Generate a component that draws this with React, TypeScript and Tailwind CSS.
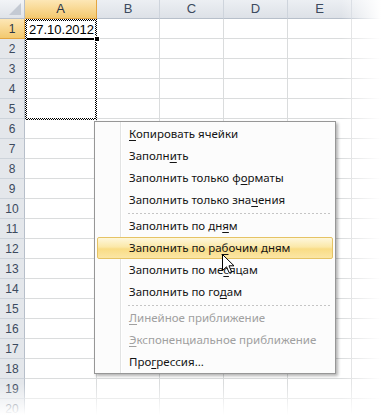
import React from "react"

const cols = [
  { name: "A", w: "w-[72px]" },
  { name: "B", w: "w-[63px]" },
  { name: "C", w: "w-[64px]" },
  { name: "D", w: "w-[64px]" },
  { name: "E", w: "w-[64px]" },
  { name: "", w: "w-[64px]" },
]

const rows = Array.from({ length: 20 }, (_, i) => i + 1)

type Item =
  | { sep: true }
  | { sep?: false; pre: string; key: string; post: string; active?: boolean; disabled?: boolean }

const items: Item[] = [
  { pre: "", key: "К", post: "опировать ячейки" },
  { pre: "Заполн", key: "и", post: "ть" },
  { pre: "Заполнить только ф", key: "о", post: "рматы" },
  { pre: "Заполнить только зна", key: "ч", post: "ения" },
  { sep: true },
  { pre: "Заполнить по дн", key: "я", post: "м" },
  { pre: "Заполнить по ра", key: "б", post: "очим дням", active: true },
  { pre: "Заполнить по ме", key: "с", post: "яцам" },
  { pre: "Заполнить по го", key: "д", post: "ам" },
  { sep: true },
  { pre: "", key: "Л", post: "инейное приближение", disabled: true },
  { pre: "", key: "Э", post: "кспоненциальное приближение", disabled: true },
  { pre: "Про", key: "г", post: "рессия..." },
]

const checker =
  "bg-[conic-gradient(#000_25%,#fff_0_50%,#000_0_75%,#fff_0)] bg-[length:2px_2px]"

function ContextMenu() {
  return (
    <div className="absolute left-[94px] top-[121px] w-[242px] border border-[#979797] bg-[#fcfcfc] pt-px shadow-[2px_2px_3px_rgba(0,0,0,0.3)] font-['Noto_Sans',sans-serif] text-[11.5px]">
      {/* icon gutter line */}
      <div className="absolute left-[25px] top-0 bottom-0 w-px bg-[#e2e3e3]" />
      <div className="absolute left-[26px] top-0 bottom-0 w-px bg-white" />
      {items.map((it, i) =>
        it.sep ? (
          <div key={i} className="h-[4px] flex items-center pl-[33px] pr-[3px]">
            <div className="h-px w-full bg-[repeating-linear-gradient(90deg,#c5c5c5_0_2px,transparent_2px_4px)]" />
          </div>
        ) : (
          <div
            key={i}
            className={
              "relative mx-[2px] h-[22px] flex items-center pl-[31px] rounded-[2px] border " +
              (it.active
                ? "border-[#e5c365] bg-[linear-gradient(#fef7dc,#fbe8a8_45%,#f9dc85_55%,#fbe6a5)]"
                : "border-transparent") +
              (it.disabled ? " text-[#a0a0a0]" : " text-[#141414]")
            }
          >
            <span className="whitespace-pre leading-none">
              {it.pre}
              <span className="underline underline-offset-[2px] decoration-1">{it.key}</span>
              {it.post}
            </span>
          </div>
        )
      )}
    </div>
  )
}

function Cursor() {
  return (
    <svg className="absolute left-[222px] top-[254px]" width="13" height="20" viewBox="0 0 13 20">
      <path
        d="M0.5 0.5 L0.5 16.5 L4.5 12.8 L7.2 18.8 L9.6 17.8 L7 11.8 L12 11.8 Z"
        fill="#fff"
        stroke="#000"
        strokeWidth="1"
        strokeLinejoin="miter"
      />
    </svg>
  )
}

export default function App() {
  return (
    <div className="relative w-[381px] h-[415px] overflow-hidden bg-white font-['Liberation_Sans',sans-serif]">
      {/* column headers */}
      <div className="flex h-[19px]">
        <div className="relative w-[25px] shrink-0 bg-[linear-gradient(#f2f4f7,#dfe3e8)] border-r border-b border-[#b7bfca]">
          <svg className="absolute right-[3px] bottom-[3px]" width="12" height="12" viewBox="0 0 12 12">
            <path d="M12 0 L12 12 L0 12 Z" fill="#c4cad3" />
          </svg>
        </div>
        {cols.map((c, i) =>
          c.name === "A" ? (
            <div
              key={i}
              className={`${c.w} shrink-0 flex items-center justify-center bg-[linear-gradient(#fde7b6,#f3c96f)] border-r border-b border-[#e3a541] text-[13px] text-[#2c3545]`}
            >
              {c.name}
            </div>
          ) : (
            <div
              key={i}
              className={`${c.w} shrink-0 flex items-center justify-center bg-[linear-gradient(#eceff3,#dde1e7)] border-r border-[#ced4dc] border-b border-b-[#b7bfca] text-[13px] text-[#3c4a5e]`}
            >
              {c.name}
            </div>
          )
        )}
      </div>

      {rows.map((r) => (
        <div key={r} className="flex h-[20px]">
          <div
            className={
              "w-[25px] shrink-0 flex items-center justify-center border-r border-b text-[12px] " +
              (r === 1
                ? "bg-[linear-gradient(#fde7b6,#f3c96f)] border-b-[#e3a541] border-r-[#e3a541] text-[#2c3545]"
                : "bg-[#e4e7eb] border-b-[#cdd3da] border-r-[#b7bfca] text-[#3c4a5e]")
            }
          >
            {r}
          </div>
          {cols.map((c, i) => (
            <div
              key={i}
              className={`${c.w} shrink-0 flex items-center pt-[2px] pl-[4px] border-r border-b border-[#dadcdd] text-[13px] text-black`}
            >
              {r === 1 && c.name === "A" ? "27.10.2012" : ""}
            </div>
          ))}
        </div>
      ))}

      {/* active cell bottom edge and marching ants around A1:A5 */}
      <div className="absolute left-[26px] top-[38px] w-[70px] h-[2px] bg-black" />
      <div className="absolute left-[25px] top-[19px] w-[72px] h-[101px]">
        <div className={`absolute left-0 top-0 w-full h-[2px] ${checker}`} />
        <div className={`absolute left-0 bottom-0 w-full h-[2px] ${checker}`} />
        <div className={`absolute left-0 top-0 w-[2px] h-full ${checker}`} />
        <div className={`absolute right-0 top-0 w-[2px] h-full ${checker}`} />
      </div>
      <div className="absolute left-[94px] top-[36px] w-[6px] h-[6px] bg-black border border-white" />

      <ContextMenu />
      <Cursor />

      {/* fades */}
      <div className="absolute right-0 top-0 w-[40px] h-full bg-[linear-gradient(90deg,rgba(255,255,255,0),#fff)]" />
      <div className="absolute left-0 bottom-0 w-full h-[32px] bg-[linear-gradient(rgba(255,255,255,0),#fff)]" />
    </div>
  )
}
